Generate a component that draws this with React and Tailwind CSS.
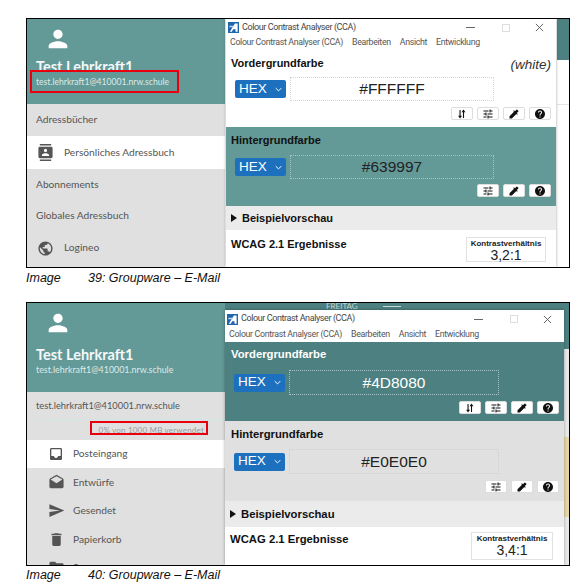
import React from "react";

const P = {
  person: "M12 12c2.21 0 4-1.79 4-4s-1.79-4-4-4-4 1.79-4 4 1.79 4 4 4zm0 2c-2.67 0-8 1.34-8 4v2h16v-2c0-2.66-5.33-4-8-4z",
  contacts: "M20 0H4v2h16V0zM4 24h16v-2H4v2zM20 4H4c-1.1 0-2 .9-2 2v12c0 1.1.9 2 2 2h16c1.1 0 2-.9 2-2V6c0-1.1-.9-2-2-2zm-8 2.75c1.24 0 2.25 1.01 2.25 2.25s-1.01 2.25-2.25 2.25S9.75 10.24 9.75 9 10.76 6.75 12 6.75zM17 17H7v-1.5c0-1.67 3.33-2.5 5-2.5s5 .83 5 2.5V17z",
  globe: "M12 2C6.48 2 2 6.48 2 12s4.48 10 10 10 10-4.48 10-10S17.52 2 12 2zm-1 17.93c-3.95-.49-7-3.85-7-7.93 0-.62.08-1.21.21-1.79L9 15v1c0 1.1.9 2 2 2v1.93zm6.9-2.54c-.26-.81-1-1.39-1.9-1.39h-1v-3c0-.55-.45-1-1-1H8v-2h2c.55 0 1-.45 1-1V7h2c1.1 0 2-.9 2-2v-.41c2.93 1.19 5 4.06 5 7.41 0 2.08-.8 3.97-2.1 5.39z",
  inbox: "M19 3H4.99c-1.11 0-1.98.89-1.98 2L3 19c0 1.1.88 2 1.99 2H19c1.1 0 2-.9 2-2V5c0-1.11-.9-2-2-2zm0 12h-4c0 1.66-1.35 3-3 3s-3-1.34-3-3H4.99V5H19v10z",
  drafts: "M21.99 8c0-.72-.37-1.35-.94-1.7L12 1 2.95 6.3C2.38 6.65 2 7.28 2 8v10c0 1.1.9 2 2 2h16c1.1 0 2-.9 2-2l-.01-10zM12 13L3.74 7.84 12 3l8.26 4.84L12 13z",
  send: "M2.01 21L23 12 2.01 3 2 10l15 2-15 2z",
  trash: "M6 19c0 1.1.9 2 2 2h8c1.1 0 2-.9 2-2V7H6v12zM19 4h-3.5l-1-1h-5l-1 1H5v2h14V4z",
  folder: "M10 4H4c-1.1 0-2 .9-2 2v12c0 1.1.9 2 2 2h16c1.1 0 2-.9 2-2V8c0-1.1-.9-2-2-2h-8l-2-2z",
  tune: "M3 17v2h6v-2H3zM3 5v2h10V5H3zm10 16v-2h8v-2h-8v-2h-2v6h2zM7 9v2H3v2h4v2h2V9H7zm14 4v-2H11v2h10zm-6-4h2V7h4V5h-4V3h-2v6z",
  picker: "M20.71 5.63l-2.34-2.34c-.39-.39-1.02-.39-1.41 0l-3.12 3.12-1.93-1.91-1.41 1.41 1.42 1.42L3 16.25V21h4.75l8.92-8.92 1.42 1.42 1.41-1.41-1.92-1.92 3.12-3.12c.4-.4.4-1.03.01-1.42z",
  help: "M12 2C6.48 2 2 6.48 2 12s4.48 10 10 10 10-4.48 10-10S17.52 2 12 2zm1 17h-2v-2h2v2zm2.07-7.75l-.9.92C13.45 12.9 13 13.5 13 15h-2v-.5c0-1.1.45-2.1 1.17-2.83l1.24-1.26c.37-.36.59-.86.59-1.41 0-1.1-.9-2-2-2s-2 .9-2 2H8c0-2.21 1.79-4 4-4s4 1.79 4 4c0 .88-.36 1.68-.93 2.25z",
  swap: "M7 4h2.2v11.5H12L8.1 21 4.2 15.5H7zM15 3l3.9 5.5h-2.8V20h-2.2V8.5h-2.8z",
};

function Icon({ d, className }) {
  return (
    <svg viewBox="0 0 24 24" className={className} fill="currentColor" aria-hidden="true">
      <path d={d} />
    </svg>
  );
}

function AppLogo() {
  return (
    <svg viewBox="0 0 12 12" className="h-[11px] w-[11px] shrink-0" aria-hidden="true">
      <rect width="12" height="12" fill="#1f66ad" />
      <path d="M2 10.5 7.5 1.5H10.5V10.5H8.2V8H5.6L4.2 10.5Z" fill="#ffffff" />
      <path d="M1.5 4H7L5.8 5.6H1.5Z" fill="#bcd6ee" />
    </svg>
  );
}

function ToolBtn({ d }) {
  return (
    <div className="flex h-[13px] w-[22px] items-center justify-center rounded-[2px] border border-[#dddddd] bg-white text-[#111111]">
      <Icon d={d} className="h-[12px] w-[12px]" />
    </div>
  );
}

function ColorRow({ value, rowClass, inputClass, toolsClass, tools }) {
  return (
    <>
      <div className={`flex items-center gap-[4px] pl-[9px] ${rowClass}`}>
        <div className="flex h-[18px] w-[51px] items-center justify-between rounded-[2px] bg-[#1c70bd] px-[4px] text-[13.5px] text-white">
          <span>HEX</span>
          <svg viewBox="0 0 10 6" className="h-[5px] w-[7px]" fill="none" stroke="#ffffff" strokeWidth="1.4">
            <path d="M1 1l4 4 4-4" />
          </svg>
        </div>
        <div className={`flex items-center justify-center border border-dotted text-[15.5px] ${inputClass}`}>{value}</div>
      </div>
      <div className={`flex justify-end gap-[4px] pr-[5px] ${toolsClass}`}>
        {tools.map((t) => (
          <ToolBtn key={t} d={P[t]} />
        ))}
      </div>
    </>
  );
}

function Preview({ tall }) {
  return (
    <div className={`flex shrink-0 items-center gap-[5px] bg-[#ebebeb] pl-[5px] font-bold text-[#111111] ${tall ? "h-[26px] text-[11.3px]" : "h-[24px] text-[11px]"}`}>
      <span className="h-0 w-0 border-y-[4px] border-l-[6px] border-y-transparent border-l-[#111111]" />
      <span>Beispielvorschau</span>
    </div>
  );
}

function Results({ ratio, fig2 }) {
  return (
    <div className={`flex flex-1 items-start justify-between pl-[5px] ${fig2 ? "pr-[11px] pt-[5px]" : "pr-[10px] pt-[7px]"}`}>
      <span className={`font-bold leading-[14px] text-[#111111] ${fig2 ? "text-[11.3px]" : "text-[11px]"}`}>WCAG 2.1 Ergebnisse</span>
      <div className={`flex flex-col items-center border border-[#e2e2e2] text-[#222222] ${fig2 ? "h-[28px] w-[82px]" : "h-[25px] w-[80px]"}`}>
        <span className="text-[8px] font-bold leading-[11px]">Kontrastverhältnis</span>
        <span className="text-[14px] leading-[13px]">{ratio}</span>
      </div>
    </div>
  );
}

function CcaWindow({ fig2 }) {
  return (
    <div
      className={`absolute flex flex-col bg-white font-['Liberation_Sans',sans-serif] shadow-[0_0_3px_rgba(0,0,0,0.35)] ${
        fig2 ? "bottom-0 left-[198px] top-[7px] w-[339px]" : "bottom-0 left-[199px] top-0 w-[330px]"
      }`}
    >
      <div className={`flex shrink-0 items-center pl-[2px] font-['Roboto',sans-serif] text-[9px] tracking-[-0.4px] text-[#444444] ${fig2 ? "h-[18px]" : "h-[17px]"}`}>
        <AppLogo />
        <span className="ml-[3px] flex-1">Colour Contrast Analyser (CCA)</span>
        <span className="mr-[27px] h-px w-[9px] bg-[#666666]" />
        <span className="mr-[25px] h-[8px] w-[8px] border border-[#dddddd]" />
        <svg viewBox="0 0 10 10" className="mr-[12px] h-[9px] w-[9px]" fill="none" stroke="#555555" strokeWidth="1">
          <path d="M1 1l8 8M9 1l-8 8" />
        </svg>
      </div>
      <div className="flex h-[14px] shrink-0 items-center gap-[9px] pl-[4px] font-['Roboto',sans-serif] text-[8.8px] tracking-[-0.33px] text-[#555555]">
        <span>Colour Contrast Analyser (CCA)</span>
        <span>Bearbeiten</span>
        <span>Ansicht</span>
        <span>Entwicklung</span>
      </div>
      {fig2 ? (
        <>
          <div className="h-[79px] shrink-0 bg-[#4d8080] pt-[6px]">
            <div className="pl-[6px] text-[11.3px] font-bold leading-[13px] text-white">Vordergrundfarbe</div>
            <ColorRow value="#4D8080" rowClass="mt-[9px]" toolsClass="mt-[6px]" inputClass="h-[25px] w-[210px] border-[#a9c4c4] text-white" tools={["swap", "tune", "picker", "help"]} />
          </div>
          <div className="h-[80px] shrink-0 bg-[#e0e0e0] pt-[7px]">
            <div className="pl-[6px] text-[11.3px] font-bold leading-[13px] text-[#111111]">Hintergrundfarbe</div>
            <ColorRow value="#E0E0E0" rowClass="mt-[8px]" toolsClass="mt-[6px]" inputClass="h-[25px] w-[210px] border-[#d0d0d0] text-[#222222]" tools={["tune", "picker", "help"]} />
          </div>
          <Preview tall />
          <Results ratio="3,4:1" fig2 />
        </>
      ) : (
        <>
          <div className="h-[77px] shrink-0 bg-white pt-[6px]">
            <div className="flex items-start justify-between px-[5px]">
              <span className="text-[11px] font-bold leading-[14px] text-[#111111]">Vordergrundfarbe</span>
              <span className="-mb-[2px] mt-[2px] text-[13.5px] italic leading-[14px] text-[#333333]">(white)</span>
            </div>
            <ColorRow value="#FFFFFF" rowClass="mt-[7px]" toolsClass="mt-[6px]" inputClass="h-[24px] w-[204px] border-[#d5d5d5] text-[#222222]" tools={["swap", "tune", "picker", "help"]} />
          </div>
          <div className="h-[79px] shrink-0 bg-[#639997] pt-[7px]">
            <div className="pl-[5px] text-[11px] font-bold leading-[13px] text-[#111111]">Hintergrundfarbe</div>
            <ColorRow value="#639997" rowClass="mt-[8px]" toolsClass="mt-[5px]" inputClass="h-[24px] w-[204px] border-[#a5c3c2] text-[#222222]" tools={["tune", "picker", "help"]} />
          </div>
          <Preview />
          <Results ratio="3,2:1" />
        </>
      )}
    </div>
  );
}

function Header({ h, nameClass, mailClass }) {
  return (
    <div className={`flex shrink-0 flex-col bg-[#639997] pl-[9px] ${h}`}>
      <Icon d={P.person} className="ml-[8px] mt-[6px] h-[28px] w-[28px] text-white" />
      <div className={`text-[14.5px] font-bold leading-[18px] text-[#f4f8f8] ${nameClass}`}>Test Lehrkraft1</div>
      <div className={`leading-[12px] text-[#dcebea] ${mailClass}`}>test.lehrkraft1@410001.nrw.schule</div>
    </div>
  );
}

function FirstFigure() {
  const rowText = "shrink-0 pl-[9px] text-[10.2px] text-[#555555]";
  return (
    <div className="relative ml-[26px] flex h-[250px] w-[544px] overflow-hidden border border-black bg-white font-['Lato',sans-serif]">
      <div className="flex w-[198px] flex-col bg-[#e0e0e0]">
        <Header h="h-[85px]" nameClass="mt-[5px]" mailClass="text-[8.6px]" />
        <div className={`flex h-[32px] items-center ${rowText}`}>Adressbücher</div>
        <div className={`flex h-[33px] items-center bg-white ${rowText}`}>
          <Icon d={P.contacts} className="ml-[1px] h-[17px] w-[17px] text-[#555555]" />
          <span className="ml-[10px]">Persönliches Adressbuch</span>
        </div>
        <div className={`flex h-[31px] items-center ${rowText}`}>Abonnements</div>
        <div className={`flex h-[32px] items-center ${rowText}`}>Globales Adressbuch</div>
        <div className={`flex h-[32px] items-center ${rowText}`}>
          <Icon d={P.globe} className="ml-[1px] h-[17px] w-[17px] text-[#555555]" />
          <span className="ml-[10px]">Logineo</span>
        </div>
      </div>
      <div className="flex flex-1 flex-col">
        <div className="ml-auto h-[41px] w-[12px] bg-[#4d8080]" />
        <div className="ml-auto mt-[44px] h-px w-[12px] bg-[#e5e5e5]" />
      </div>
      <CcaWindow />
      <div className="pointer-events-none absolute left-[3px] top-[51px] h-[23px] w-[149px] border-[2.5px] border-[#e8000f]" />
    </div>
  );
}

function SecondFigure() {
  const items = [
    ["Entwürfe", P.drafts],
    ["Gesendet", P.send],
    ["Papierkorb", P.trash],
    ["Spam", P.folder],
  ];
  return (
    <div className="relative ml-[26px] mt-[16px] flex h-[264px] w-[544px] overflow-hidden border border-black bg-white font-['Lato',sans-serif]">
      <div className="flex w-[198px] shrink-0 flex-col bg-[#e0e0e0]">
        <Header h="h-[89px]" nameClass="mt-[9px]" mailClass="text-[8.9px]" />
        <div className="flex h-[27px] shrink-0 items-center pl-[9px] text-[9.3px] text-[#555555]">test.lehrkraft1@410001.nrw.schule</div>
        <div className="ml-[9px] h-px shrink-0 bg-[#cfe8e6]" />
        <div className="flex h-[20px] shrink-0 items-center justify-end pr-[21px] text-[8px] tracking-[0.2px] text-[#9a9a9a]">0% von 1000 MB verwendet</div>
        <div className="flex h-[28px] shrink-0 items-center bg-white pl-[21px] text-[10.2px] text-[#555555]">
          <Icon d={P.inbox} className="h-[16px] w-[16px] text-[#555555]" />
          <span className="ml-[9px]">Posteingang</span>
        </div>
        {items.map(([t, d]) => (
          <div key={t} className="flex h-[28.5px] shrink-0 items-center pl-[21px] text-[10.2px] text-[#555555]">
            <Icon d={d} className="h-[17px] w-[17px] text-[#555555]" />
            <span className="ml-[8px]">{t}</span>
          </div>
        ))}
      </div>
      <div className="flex flex-1 flex-col bg-[#e9e9e9]">
        <div className="flex h-[46px] items-start gap-[25px] bg-[#4d8080] pl-[101px] text-[8px] leading-[6px] text-[#c7d8d8]">
          <span>FREITAG</span>
          <span className="mt-[3px] h-px w-[18px] bg-[#c7d8d8]" />
        </div>
        <div className="ml-auto mt-[88px] h-[80px] w-[5px] bg-[#e6d6a5]" />
      </div>
      <CcaWindow fig2 />
      <div className="pointer-events-none absolute left-[63px] top-[118px] h-[14px] w-[118px] border-[2px] border-[#e8000f]" />
    </div>
  );
}

function Caption({ n, className }) {
  return (
    <div className={`ml-[26px] flex h-[15px] items-center font-['Liberation_Sans',sans-serif] text-[12.5px] italic text-[#111111] ${className}`}>
      <span className="w-[62px]">Image</span>
      <span>{n}: Groupware – E-Mail</span>
    </div>
  );
}

export default function App() {
  return (
    <div className="h-[587px] w-[588px] overflow-hidden bg-white pt-[18px]">
      <FirstFigure />
      <Caption n="39" className="mt-[3px]" />
      <SecondFigure />
      <Caption n="40" className="mt-[2px]" />
    </div>
  );
}
